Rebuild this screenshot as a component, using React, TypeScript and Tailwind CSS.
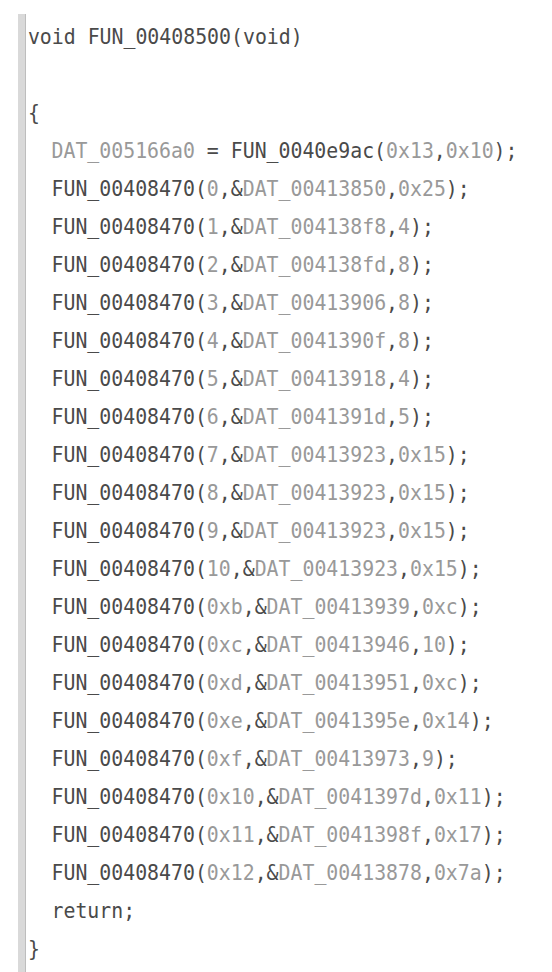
type Tok = [string, "d" | "l"];

const calls: [string, string, string][] = [
  ["0", "00413850", "0x25"],
  ["1", "004138f8", "4"],
  ["2", "004138fd", "8"],
  ["3", "00413906", "8"],
  ["4", "0041390f", "8"],
  ["5", "00413918", "4"],
  ["6", "0041391d", "5"],
  ["7", "00413923", "0x15"],
  ["8", "00413923", "0x15"],
  ["9", "00413923", "0x15"],
  ["10", "00413923", "0x15"],
  ["0xb", "00413939", "0xc"],
  ["0xc", "00413946", "10"],
  ["0xd", "00413951", "0xc"],
  ["0xe", "0041395e", "0x14"],
  ["0xf", "00413973", "9"],
  ["0x10", "0041397d", "0x11"],
  ["0x11", "0041398f", "0x17"],
  ["0x12", "00413878", "0x7a"],
];

// one decompiler line, dark = code, light = data/constants
const Line = ({ toks, indent = false }: { toks: Tok[]; indent?: boolean }) => (
  <div className={`h-[38px] leading-[38px] whitespace-pre ${indent ? "pl-[25px]" : ""}`}>
    {toks.map(([t, c], i) => (
      <span key={i} className={c === "d" ? "text-[#4a4a4a]" : "text-[#999999]"}>
        {t}
      </span>
    ))}
  </div>
);

export default function App() {
  return (
    <div className="w-[552px] h-[972px] bg-white pt-[14px] pl-[18px] flex overflow-hidden">
      <div className="w-[8px] shrink-0 bg-[#d9d9d9] border-r border-[#bdbdbd]" />
      <div
        className="pt-[4px] pl-[2px] text-[21px] scale-x-[0.945] origin-left"
        style={{ fontFamily: '"DejaVu Sans Mono", monospace' }}
      >
        <Line toks={[["void FUN_00408500(void)", "d"]]} />
        <Line toks={[[" ", "d"]]} />
        <Line toks={[["{", "d"]]} />
        <Line
          indent
          toks={[
            ["DAT_005166a0", "l"],
            [" = FUN_0040e9ac(", "d"],
            ["0x13", "l"],
            [",", "d"],
            ["0x10", "l"],
            [");", "d"],
          ]}
        />
        {calls.map(([a, dat, b], i) => (
          <Line
            key={i}
            indent
            toks={[
              ["FUN_00408470(", "d"],
              [a, "l"],
              [",&", "d"],
              ["DAT_" + dat, "l"],
              [",", "d"],
              [b, "l"],
              [");", "d"],
            ]}
          />
        ))}
        <Line indent toks={[["return;", "d"]]} />
        <Line toks={[["}", "d"]]} />
      </div>
    </div>
  );
}
